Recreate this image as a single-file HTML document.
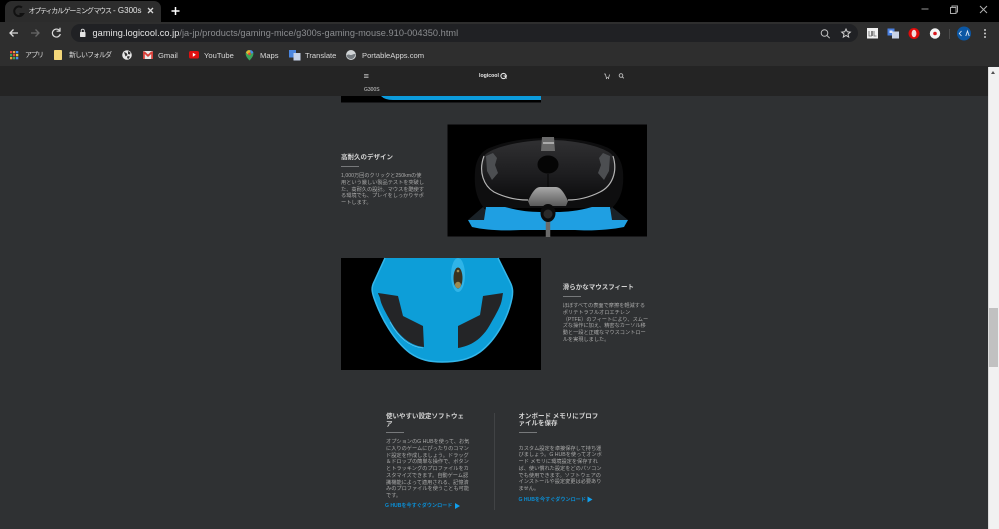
<!DOCTYPE html>
<html lang="ja"><head><meta charset="utf-8"><title>G300s</title>
<style>
html,body{margin:0;padding:0;background:#2f3133;width:999px;height:529px;overflow:hidden}
body{font-family:"Liberation Sans","Noto Sans CJK JP",sans-serif}
#w{position:absolute;left:0;top:0;width:999px;height:529px;overflow:hidden;background:#2f3133;filter:blur(.3px)}
.a{position:absolute}
.t{position:absolute;white-space:nowrap;line-height:1}
.bm{position:absolute;white-space:nowrap;font-size:7.6px;line-height:11px;top:50px;color:#d8d8d8}
.bm.j{font-size:7px;letter-spacing:-1px}
.b{font-size:5.2px;color:#a9a9a9}
.h{font-size:6.5px;color:#d4d4d4;font-weight:700}
.l{position:absolute;height:1px;width:18px;background:#77797b}
.dl{font-size:5.1px;color:#0a8fd6;font-weight:700}
</style></head><body><div id="w">
<div class="a" style="left:0;top:0;width:999px;height:22px;background:#000"></div>
<div class="a" style="left:5px;top:1px;width:156px;height:21px;background:#2c2c2c;border-radius:7px 7px 0 0"></div>
<div class="a" style="left:0;top:22px;width:999px;height:44px;background:#2e2e2e"></div>
<div class="a" style="left:71px;top:24px;width:787px;height:18px;background:#202124;border-radius:9px"></div>
<div class="a" style="left:0;top:66px;width:989px;height:30px;background:#242424"></div>

<div class="t" style="left:28.500px;top:6px;font-size:8px;line-height:10px;color:#e4e4e4;width:113px;overflow:hidden"><span style="font-size:7px;letter-spacing:-1.200px">オプティカル ゲーミング マウス</span> - G300s</div>
<div class="t" style="left:92.500px;top:28px;font-size:9.200px;line-height:11px;color:#e4e4e4;letter-spacing:.05px">gaming.logicool.co.jp<span style="color:#8b8d90">/ja-jp/products/gaming-mice/g300s-gaming-mouse.910-004350.html</span></div>

<div class="bm j" style="left:25px">アプリ</div>
<div class="bm j" style="left:69px">新しいフォルダ</div>
<div class="bm" style="left:158px">Gmail</div>
<div class="bm" style="left:204px">YouTube</div>
<div class="bm" style="left:260px">Maps</div>
<div class="bm" style="left:305px">Translate</div>
<div class="bm" style="left:362px">PortableApps.com</div>

<svg class="a" style="left:0;top:0" width="999" height="529" viewBox="0 0 999 529">
<defs>
<linearGradient id="sh" x1="0" y1="0" x2="0" y2="1"><stop offset="0" stop-color="#303032"/><stop offset=".6" stop-color="#1c1c1e"/><stop offset="1" stop-color="#0c0c0d"/></linearGradient>
<linearGradient id="gr" x1="0" y1="0" x2="0" y2="1"><stop offset="0" stop-color="#a8a8a8"/><stop offset="1" stop-color="#5a5a5a"/></linearGradient>
</defs>
<!-- chrome icons -->
<path d="M22 7.500a4.800 4.800 0 1 0 1 6.500h-3.500" fill="none" stroke="#111" stroke-width="2"/>
<path d="M148 8l5 5M153 8l-5 5" stroke="#d8d8d8" stroke-width="1.300"/>
<path d="M175.500 7v8M171.500 11h8" stroke="#fff" stroke-width="1.500"/>
<path d="M921.500 9h7" stroke="#999" stroke-width="1"/>
<path d="M950.500 7.500h5.500v6h-5.500zM952 7.500v-1.500h5.500v6h-1.500" fill="none" stroke="#aaa" stroke-width="1"/>
<path d="M980 6l7 7M987 6l-7 7" stroke="#b0b0b0" stroke-width="1"/>
<path d="M18 33h-7.500M13.500 29.500L10 33l3.500 3.500" fill="none" stroke="#dcdcdc" stroke-width="1.300"/>
<path d="M31 33h7.500M35.500 29.500L39 33l-3.500 3.500" fill="none" stroke="#686868" stroke-width="1.300"/>
<path d="M59.500 30.500a4 4 0 1 0 .8 3.500M60 27.800v3.400h-3.400" fill="none" stroke="#dcdcdc" stroke-width="1.200"/>
<rect x="80" y="32" width="5.500" height="5" rx=".6" fill="#e4e4e4"/><path d="M81.200 32v-1.300a1.500 1.500 0 0 1 3.100 0V32" fill="none" stroke="#e4e4e4" stroke-width=".9"/>
<circle cx="824.500" cy="33" r="3.300" fill="none" stroke="#c2c2c2" stroke-width="1"/><path d="M827 35.500l2.700 2.700" stroke="#c2c2c2" stroke-width="1"/>
<path d="M846 29l1.300 2.800 3 .3-2.300 2 .7 3-2.700-1.600-2.700 1.600.7-3-2.300-2 3-.3z" fill="none" stroke="#d0d0d0" stroke-width="1"/>
<rect x="867" y="28" width="11" height="10.500" fill="#f0f0f0"/><path d="M869 31v5h2.500v-5M872.500 31v5M874 31v5h2.500" fill="none" stroke="#666" stroke-width=".8"/>
<rect x="887.500" y="28.500" width="7" height="7" fill="#4a80e0"/><rect x="892" y="31.500" width="7" height="7" fill="#c9d4e8"/><rect x="889.500" y="30.500" width="3" height="2.500" fill="#dfe9ff"/>
<circle cx="914" cy="33.500" r="5.500" fill="#e00b0b"/><ellipse cx="914" cy="33.500" rx="2.400" ry="3.700" fill="#f3dcdc"/>
<circle cx="935" cy="33.500" r="5.200" fill="#f4f4f4"/><circle cx="935" cy="33.500" r="1.800" fill="#d9171c"/>
<path d="M949.500 29v10" stroke="#4a4a4a"/>
<circle cx="964" cy="33.500" r="7" fill="#0b57a4"/>
<path d="M961.500 31l-2.200 2.500 2.200 2.500M965.800 36l1.700-5 1.700 5" fill="none" stroke="#dfe8f4" stroke-width=".9"/>
<circle cx="985" cy="30" r="1" fill="#ccc"/><circle cx="985" cy="33.500" r="1" fill="#ccc"/><circle cx="985" cy="37" r="1" fill="#ccc"/>

<!-- bookmark icons -->
<g>
<rect x="10" y="51" width="2.300" height="2.300" fill="#e0483e"/><rect x="13" y="51" width="2.300" height="2.300" fill="#e9a23b"/><rect x="16" y="51" width="2.300" height="2.300" fill="#4a8df0"/>
<rect x="10" y="54" width="2.300" height="2.300" fill="#3fa35a"/><rect x="13" y="54" width="2.300" height="2.300" fill="#e0483e"/><rect x="16" y="54" width="2.300" height="2.300" fill="#e9c63b"/>
<rect x="10" y="57" width="2.300" height="2.300" fill="#e9a23b"/><rect x="13" y="57" width="2.300" height="2.300" fill="#3fa35a"/><rect x="16" y="57" width="2.300" height="2.300" fill="#4a8df0"/>
<rect x="54" y="50" width="8" height="10" rx=".8" fill="#f3d679"/>
<circle cx="127" cy="55" r="4.800" fill="#e8e8e8"/><path d="M124 52l2.500 1 1 2-2 1.500zM128 51l2.500 1.500-.5 2-2-.5zM127.500 56l2.500.5-1.500 2.500-1.500-1z" fill="#333"/>
<rect x="143" y="51" width="10" height="8" rx="1" fill="#e8e8e8"/><path d="M143 51.500h1.800l3.200 3 3.200-3h1.800v7.500h-1.800v-5l-3.200 3-3.200-3v5H143z" fill="#d8403a"/>
<rect x="189" y="51" width="10" height="7.500" rx="1.800" fill="#e01010"/><path d="M192.800 52.800l3 2-3 2z" fill="#fff"/>
<path d="M249.500 50a3.900 3.900 0 0 0-3.900 3.900c0 2.800 3.900 6.600 3.900 6.600s3.900-3.800 3.900-6.600a3.900 3.900 0 0 0-3.900-3.900z" fill="#3ba55c"/><path d="M246 52.500a3.900 3.900 0 0 1 3.500-2.500l1 2-2.700 2.500z" fill="#e6b52e"/><path d="M250 50a3.900 3.900 0 0 1 3.400 3l-2.400.6z" fill="#4a86e8"/><circle cx="249.500" cy="53.900" r="1.300" fill="#e84335"/>
<rect x="289" y="50" width="7" height="7.500" fill="#4a86e0"/><rect x="293.500" y="53" width="7" height="7.500" fill="#c5d3ea"/>
<circle cx="351" cy="55" r="5" fill="#d0d4d6"/><path d="M346.500 55.500c2-2 3-.5 4.500-.5s2.500-1.500 4.500-.8c-.5 2.800-2.400 4.800-4.500 4.800s-4-1.500-4.500-3.500z" fill="#757b80"/>
</g>

<!-- site nav -->
<path d="M364 74.500h4.500M364 76h4.500M364 77.500h4.500" stroke="#bcbcbc" stroke-width=".8"/>
<circle cx="503.500" cy="76" r="2.600" fill="none" stroke="#e4e4e4" stroke-width="1.100"/><path d="M503.500 76h3.500M505 76l1.500 2.500" stroke="#e4e4e4" stroke-width="1"/>
<path d="M604 74h1.300l1 3.500h2.400l.9-3" fill="none" stroke="#bdbdbd" stroke-width=".8"/><circle cx="606.500" cy="78.500" r=".6" fill="#bdbdbd"/><circle cx="608.500" cy="78.500" r=".6" fill="#bdbdbd"/>
<circle cx="621" cy="75.500" r="1.800" fill="none" stroke="#bdbdbd" stroke-width=".9"/><path d="M622.300 76.800l1.500 1.500" stroke="#bdbdbd" stroke-width="1"/>

<!-- top image remnant -->
<rect x="341" y="96" width="200" height="6.500" fill="#000"/>
<path d="M381 96h160v4h-148q-8 0-12-4z" fill="#0c9bdc"/>

<!-- image 1 -->
<rect x="447.500" y="124.500" width="199.500" height="112" fill="#000"/>
<path d="M475 172C476 158 482 150 492 147C510 140 530 138 550 138C570 138 592 141 606 147C616 151 622 160 623 172C624 186 622 198 612 208L484 208C476 198 474 186 475 172Z" fill="#0e0e0f"/>
<path d="M484 156C490 148 520 140 550 140C578 140 608 148 613 156C618 172 612 186 600 192C590 197 578 200 568 200C564 192 560 187 556 187H540C536 187 532 192 528 200C516 200 504 197 494 192C484 186 478 172 484 156Z" fill="url(#sh)"/>
<path d="M484 156C478 172 484 186 494 192C504 197 516 200 528 200M613 156C618 172 612 186 600 192C590 197 578 200 568 200" fill="none" stroke="#b5b5b5" stroke-width="1.200"/>
<path d="M528 201C532 192 536 187 540 187H556C560 187 564 192 568 201L566 206H530Z" fill="url(#gr)"/>
<path d="M542 137h12l1 14h-14z" fill="#6a6a6a"/><rect x="543" y="142" width="11" height="2" fill="#aaa"/>
<ellipse cx="548" cy="164.500" rx="10.500" ry="9" fill="#050505"/><path d="M548 174v13" stroke="#050505" stroke-width="1"/>
<path d="M486 156l7-3 4 5-2 7 3 8-6 7-5-9z" fill="#4c4e51"/><path d="M610 156l-7-3-4 5 2 7-3 8 6 7 5-9z" fill="#4c4e51"/>
<path d="M468 220L483 207 490 215 486 221z" fill="#1a2228"/><path d="M628 220L612 207 606 215 610 221z" fill="#1a2228"/>
<path d="M486 207H505C520 211 530 212 540 212H556C566 212 578 211 592 207H610L612 220H628L624 227C610 230 590 231 575 230H521C500 231 485 230 472 227L468 220H484Z" fill="#1f9fe2"/>
<path d="M548 237V222" stroke="#6a6a6a" stroke-width="4.500"/>
<ellipse cx="548" cy="213" rx="7.500" ry="9" fill="#0b0b0b"/><circle cx="548" cy="214" r="4.500" fill="#2a2a2a"/>

<!-- image 2 -->
<rect x="341" y="258" width="200" height="112" fill="#000"/>
<path d="M385 258l-11 24c-3 6-2 10 0 16 7 20 20 43 36 55 10 7 20 9 32 9 14 0 27-2 38-10 16-12 28-34 32-54 1-6 1-10-2-16l-12-24z" fill="#0d9ed8"/>
<path d="M385 258l-11 24c-3 6-2 10 0 16 7 20 20 43 36 55 10 7 20 9 32 9 14 0 27-2 38-10 16-12 28-34 32-54 1-6 1-10-2-16l-12-24" fill="none" stroke="#33b6ea" stroke-width="1.500"/>
<path d="M378 293l20 3 5 20 20 10 1 21c-12-1-24-9-33-25-5-9-10-17-11-24-1-3-2-4-2-5z" fill="#242527"/>
<path d="M503 293l-20 3-3 19-22 11v22c12-2 24-8 33-25 5-9 10-17 11-24z" fill="#242527"/>
<path d="M423 348q-20-2-33-26" fill="none" stroke="#7dcdee" stroke-width=".6"/>
<ellipse cx="458" cy="275" rx="7" ry="17" fill="#2fb4e8"/>
<ellipse cx="458" cy="278" rx="4.500" ry="10.500" fill="#3a3320"/>
<ellipse cx="458" cy="285" rx="3" ry="3.200" fill="#9c8a52"/><circle cx="458" cy="271" r="1.300" fill="#a08c50"/>

<!-- divider, triangles -->
<path d="M494.500 413v97" stroke="#414345" stroke-width="1"/>
<path d="M455 503v6l5-3zM587.500 496.500v6l5-3z" fill="#10a0ee"/>
</svg>

<div class="t" style="left:364px;top:88px;font-size:5px;color:#cfcfcf">G300S</div>
<div class="t" style="left:479px;top:73.500px;font-size:5.200px;font-weight:700;color:#e8e8e8">logicool</div>

<!-- section 1 -->
<div class="t h" style="left:341px;top:154.500px">高耐久のデザイン</div>
<div class="l" style="left:341px;top:166px"></div>
<div class="t b" style="left:341px;top:174px">1,000万回のクリックと250kmの使</div>
<div class="t b" style="left:341px;top:180.700px">用という厳しい製品テストを突破し</div>
<div class="t b" style="left:341px;top:187.500px">た、高耐久の設計。マウスを酷使す</div>
<div class="t b" style="left:341px;top:194.300px">る環境でも、プレイをしっかりサポ</div>
<div class="t b" style="left:341px;top:201px">ートします。</div>

<!-- section 2 -->
<div class="t h" style="left:562.700px;top:284.500px">滑らかなマウスフィート</div>
<div class="l" style="left:563px;top:296px"></div>
<div class="t b" style="left:562.700px;top:304px">ほぼすべての表面で摩擦を軽減する</div>
<div class="t b" style="left:562.700px;top:310.700px">ポリテトラフルオロエチレン</div>
<div class="t b" style="left:562.700px;top:317.500px">（PTFE）のフィートにより、スムー</div>
<div class="t b" style="left:562.700px;top:324.200px">ズな操作に加え、精密なカーソル移</div>
<div class="t b" style="left:562.700px;top:331px">動と一段と正確なマウスコントロー</div>
<div class="t b" style="left:562.700px;top:337.700px">ルを実現しました。</div>

<!-- section 3 left -->
<div class="t h" style="left:386px;top:413.500px">使いやすい設定ソフトウェ</div>
<div class="t h" style="left:386px;top:421.500px">ア</div>
<div class="l" style="left:386px;top:432px"></div>
<div class="t b" style="left:386px;top:440.300px">オプションのG HUBを使って、お気</div>
<div class="t b" style="left:386px;top:447px">に入りのゲームにぴったりのコマン</div>
<div class="t b" style="left:386px;top:453.700px">ド設定を作成しましょう。ドラッグ</div>
<div class="t b" style="left:386px;top:460.400px">＆ドロップの簡単な操作で、ボタン</div>
<div class="t b" style="left:386px;top:467.100px">とトラッキングのプロファイルをカ</div>
<div class="t b" style="left:386px;top:473.800px">スタマイズできます。自動ゲーム認</div>
<div class="t b" style="left:386px;top:480.500px">識機能によって適用される、記憶済</div>
<div class="t b" style="left:386px;top:487.200px">みのプロファイルを使うことも可能</div>
<div class="t b" style="left:386px;top:493.900px">です。</div>
<div class="t dl" style="left:385px;top:504px">G HUBを今すぐダウンロード</div>

<!-- section 3 right -->
<div class="t h" style="left:518.500px;top:413.500px">オンボード メモリにプロフ</div>
<div class="t h" style="left:518.500px;top:421px">ァイルを保存</div>
<div class="l" style="left:518.500px;top:432px"></div>
<div class="t b" style="left:518.500px;top:446.700px">カスタム設定を卓接保存して持ち運</div>
<div class="t b" style="left:518.500px;top:453.400px">びましょう。G HUBを使ってオンボ</div>
<div class="t b" style="left:518.500px;top:460.100px">ード メモリに環境設定を保存すれ</div>
<div class="t b" style="left:518.500px;top:466.800px">ば、使い慣れた設定をどのパソコン</div>
<div class="t b" style="left:518.500px;top:473.500px">でも使用できます。ソフトウェアの</div>
<div class="t b" style="left:518.500px;top:480.200px">インストールや設定変更は必要あり</div>
<div class="t b" style="left:518.500px;top:486.900px">ません。</div>
<div class="t dl" style="left:518.500px;top:497.500px">G HUBを今すぐダウンロード</div>

<!-- scrollbar -->
<div class="a" style="left:988px;top:67px;width:11px;height:462px;background:#f1f1f1"></div>
<div class="a" style="left:987.500px;top:67px;width:1.500px;height:462px;background:#dcdcdc"></div>
<div class="a" style="left:989px;top:308px;width:9px;height:59px;background:#c1c1c1"></div>
<div class="a" style="left:991px;top:71px;width:0;height:0;border-left:2.500px solid transparent;border-right:2.500px solid transparent;border-bottom:3px solid #505050"></div>
</div></body></html>
